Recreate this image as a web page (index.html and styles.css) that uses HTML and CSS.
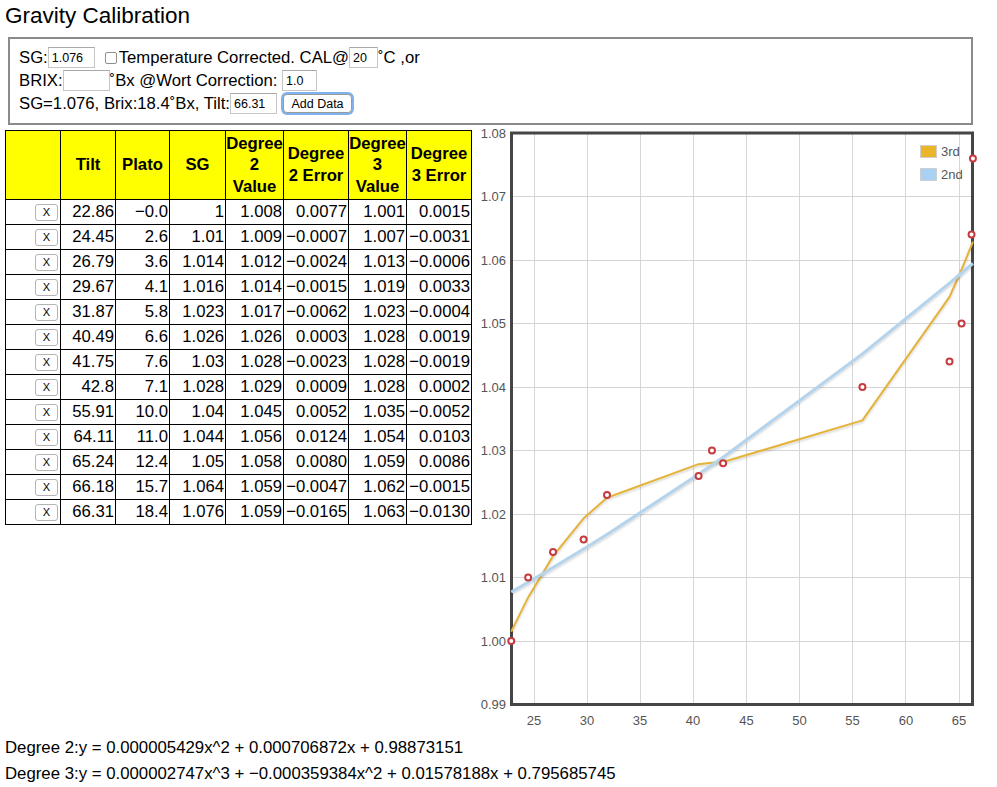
FILE: index.html
```html
<!DOCTYPE html>
<html>
<head>
<meta charset="utf-8">
<title>Gravity Calibration</title>
<link rel="stylesheet" href="styles.css">
</head>
<body>
<div class="page">
  <h1 class="title">Gravity Calibration</h1>
  <div class="form">
    <div class="row">
      <span>SG:</span><input class="inp w47" type="text" value="1.076"><input class="chk" type="checkbox"><span>Temperature Corrected. CAL@</span><input class="inp w29" type="text" value="20"><span>˚C ,or</span>
    </div>
    <div class="row">
      <span>BRIX:</span><input class="inp w47" type="text" value=""><span>˚Bx @Wort Correction: </span><input class="inp w35" type="text" value="1.0">
    </div>
    <div class="row">
      <span>SG=1.076, Brix:18.4˚Bx, Tilt:</span><input class="inp w47" type="text" value="66.31"><button class="btn" type="button">Add Data</button>
    </div>
  </div>

  <div class="main">
    <table class="tbl">
      <colgroup>
        <col class="c55"><col class="c55"><col class="c54"><col class="c56"><col class="c58"><col class="c65"><col class="c58"><col class="c65">
      </colgroup>
      <thead>
        <tr class="head">
          <th></th><th>Tilt</th><th>Plato</th><th>SG</th><th>Degree 2 Value</th><th>Degree 2 Error</th><th>Degree 3 Value</th><th>Degree 3 Error</th>
        </tr>
      </thead>
      <tbody>
        <tr><td><button class="x" type="button">X</button></td><td>22.86</td><td>−0.0</td><td>1</td><td>1.008</td><td>0.0077</td><td>1.001</td><td>0.0015</td></tr>
        <tr><td><button class="x" type="button">X</button></td><td>24.45</td><td>2.6</td><td>1.01</td><td>1.009</td><td>−0.0007</td><td>1.007</td><td>−0.0031</td></tr>
        <tr><td><button class="x" type="button">X</button></td><td>26.79</td><td>3.6</td><td>1.014</td><td>1.012</td><td>−0.0024</td><td>1.013</td><td>−0.0006</td></tr>
        <tr><td><button class="x" type="button">X</button></td><td>29.67</td><td>4.1</td><td>1.016</td><td>1.014</td><td>−0.0015</td><td>1.019</td><td>0.0033</td></tr>
        <tr><td><button class="x" type="button">X</button></td><td>31.87</td><td>5.8</td><td>1.023</td><td>1.017</td><td>−0.0062</td><td>1.023</td><td>−0.0004</td></tr>
        <tr><td><button class="x" type="button">X</button></td><td>40.49</td><td>6.6</td><td>1.026</td><td>1.026</td><td>0.0003</td><td>1.028</td><td>0.0019</td></tr>
        <tr><td><button class="x" type="button">X</button></td><td>41.75</td><td>7.6</td><td>1.03</td><td>1.028</td><td>−0.0023</td><td>1.028</td><td>−0.0019</td></tr>
        <tr><td><button class="x" type="button">X</button></td><td>42.8</td><td>7.1</td><td>1.028</td><td>1.029</td><td>0.0009</td><td>1.028</td><td>0.0002</td></tr>
        <tr><td><button class="x" type="button">X</button></td><td>55.91</td><td>10.0</td><td>1.04</td><td>1.045</td><td>0.0052</td><td>1.035</td><td>−0.0052</td></tr>
        <tr><td><button class="x" type="button">X</button></td><td>64.11</td><td>11.0</td><td>1.044</td><td>1.056</td><td>0.0124</td><td>1.054</td><td>0.0103</td></tr>
        <tr><td><button class="x" type="button">X</button></td><td>65.24</td><td>12.4</td><td>1.05</td><td>1.058</td><td>0.0080</td><td>1.059</td><td>0.0086</td></tr>
        <tr><td><button class="x" type="button">X</button></td><td>66.18</td><td>15.7</td><td>1.064</td><td>1.059</td><td>−0.0047</td><td>1.062</td><td>−0.0015</td></tr>
        <tr><td><button class="x" type="button">X</button></td><td>66.31</td><td>18.4</td><td>1.076</td><td>1.059</td><td>−0.0165</td><td>1.063</td><td>−0.0130</td></tr>
      </tbody>
    </table>

    <svg class="chart" width="521" height="604" viewBox="476 126 521 604" xmlns="http://www.w3.org/2000/svg">
      <defs>
        <filter id="sh" x="-5%" y="-5%" width="110%" height="115%">
          <feDropShadow dx="0" dy="1.5" stdDeviation="1" flood-color="#000" flood-opacity="0.2"/>
        </filter>
      </defs>
      <g class="grid">
        <line x1="533.5" y1="133" x2="533.5" y2="704.5"/>
        <line x1="586.5" y1="133" x2="586.5" y2="704.5"/>
        <line x1="639.5" y1="133" x2="639.5" y2="704.5"/>
        <line x1="692.5" y1="133" x2="692.5" y2="704.5"/>
        <line x1="745.5" y1="133" x2="745.5" y2="704.5"/>
        <line x1="798.5" y1="133" x2="798.5" y2="704.5"/>
        <line x1="851.5" y1="133" x2="851.5" y2="704.5"/>
        <line x1="904.5" y1="133" x2="904.5" y2="704.5"/>
        <line x1="958.5" y1="133" x2="958.5" y2="704.5"/>
        <line x1="510" y1="196.5" x2="972" y2="196.5"/>
        <line x1="510" y1="260.5" x2="972" y2="260.5"/>
        <line x1="510" y1="323.5" x2="972" y2="323.5"/>
        <line x1="510" y1="387.5" x2="972" y2="387.5"/>
        <line x1="510" y1="450.5" x2="972" y2="450.5"/>
        <line x1="510" y1="514.5" x2="972" y2="514.5"/>
        <line x1="510" y1="577.5" x2="972" y2="577.5"/>
        <line x1="510" y1="641.5" x2="972" y2="641.5"/>
      </g>
      <g class="ylab">
        <text x="505" y="133">1.08</text>
        <text x="505" y="196.5">1.07</text>
        <text x="505" y="260">1.06</text>
        <text x="505" y="323.5">1.05</text>
        <text x="505" y="387">1.04</text>
        <text x="505" y="450.5">1.03</text>
        <text x="505" y="514">1.02</text>
        <text x="505" y="577.5">1.01</text>
        <text x="505" y="641">1.00</text>
        <text x="505" y="704.5">0.99</text>
      </g>
      <g class="xlab">
        <text x="533" y="720">25</text>
        <text x="586" y="720">30</text>
        <text x="639" y="720">35</text>
        <text x="692" y="720">40</text>
        <text x="745.5" y="720">45</text>
        <text x="798.5" y="720">50</text>
        <text x="851.5" y="720">55</text>
        <text x="905" y="720">60</text>
        <text x="958" y="720">65</text>
      </g>
      <rect class="frame" x="510.5" y="133" width="461" height="571.5"/>
      <polyline class="l3" filter="url(#sh)" points="510.26,631.67 527.16,597.42 552.02,556.11 582.62,518.36 605.99,497.8 697.58,464.14 710.97,462.86 722.13,462.02 861.42,420.36 948.54,296.89 960.55,269.78 970.54,245.17 971.92,241.6"/>
      <polyline class="l2" filter="url(#sh)" points="510.26,591.93 527.16,582.2 552.02,567.56 582.62,549.03 605.99,534.49 697.58,474.29 710.97,465.07 722.13,457.29 861.42,353.83 948.54,283.09 960.55,272.99 970.54,264.5 971.92,263.33"/>
      <g class="pts">
        <circle cx="510.26" cy="641" r="3"/>
        <circle cx="527.16" cy="577.5" r="3"/>
        <circle cx="552.02" cy="552.1" r="3"/>
        <circle cx="582.62" cy="539.4" r="3"/>
        <circle cx="605.99" cy="494.95" r="3"/>
        <circle cx="697.58" cy="475.9" r="3"/>
        <circle cx="710.97" cy="450.5" r="3"/>
        <circle cx="722.13" cy="463.2" r="3"/>
        <circle cx="861.42" cy="387" r="3"/>
        <circle cx="948.54" cy="361.6" r="3"/>
        <circle cx="960.55" cy="323.5" r="3"/>
        <circle cx="970.54" cy="234.6" r="3"/>
        <circle cx="971.92" cy="158.4" r="3"/>
      </g>
      <g class="legend">
        <rect class="sw3" x="919.5" y="145.5" width="16" height="12"/>
        <text x="940" y="151.5">3rd</text>
        <rect class="sw2" x="919.5" y="168.5" width="16" height="12"/>
        <text x="940" y="174.5">2nd</text>
      </g>
    </svg>
  </div>

  <div class="eq">
    <div>Degree 2:y = 0.000005429x^2 + 0.000706872x + 0.98873151</div>
    <div>Degree 3:y = 0.000002747x^3 + −0.000359384x^2 + 0.01578188x + 0.795685745</div>
  </div>
</div>
</body>
</html>
```
FILE: styles.css
```css
body {
  margin: 0;
  background: #fff;
  color: #000;
  font-family: "Liberation Sans", Arial, sans-serif;
  font-size: 16.7px;
}

.page {
  padding-left: 5px;
}

.title {
  margin: 0;
  font-size: 22.5px;
  font-weight: normal;
  line-height: 32px;
}

.form {
  box-sizing: border-box;
  width: 965px;
  margin: 5px 0 0 3px;
  padding: 7px 9px 8px;
  border: 2px solid #8a8a8a;
}

.row {
  display: flex;
  align-items: center;
  height: 23px;
  white-space: pre;
}

.inp {
  box-sizing: border-box;
  height: 21px;
  margin: 0;
  padding: 0 3px;
  border: 1px solid #c6c6c6;
  border-top-color: #a9a9a9;
  font-family: "Liberation Sans", Arial, sans-serif;
  font-size: 12.5px;
  color: #000;
  background: #fff;
}

.w47 { width: 47px; }
.w29 { width: 29px; }
.w35 { width: 35px; }

.chk {
  -webkit-appearance: none;
  appearance: none;
  box-sizing: border-box;
  width: 12px;
  height: 12px;
  margin: 0 2px 0 10px;
  border: 1px solid #8f8f8f;
  border-radius: 2px;
  background: #fff;
}

.btn {
  box-sizing: border-box;
  height: 19px;
  width: 69px;
  margin: 0 0 0 6px;
  padding: 0;
  border: 1px solid #9a9a9a;
  border-radius: 4px;
  background: #fff;
  font-family: "Liberation Sans", Arial, sans-serif;
  font-size: 12.5px;
  color: #000;
  box-shadow: 0 0 0 2px #80b2ef;
}

.main {
  display: flex;
  align-items: flex-start;
  gap: 5px;
  margin-top: 1px;
}

.tbl {
  margin-top: 4px;
  width: 466px;
  table-layout: fixed;
  border-collapse: collapse;
  line-height: 21.6px;
}

.c54 { width: 54px; }
.c55 { width: 55px; }
.c56 { width: 56px; }
.c58 { width: 58px; }
.c65 { width: 65px; }

.tbl th,
.tbl td {
  border: 1px solid #000;
}

.tbl th {
  padding: 0;
  background: #ffff00;
  font-weight: bold;
  text-align: center;
  vertical-align: middle;
}

.tbl .head {
  height: 69px;
}

.tbl tbody tr {
  height: 25px;
}

.tbl td {
  padding: 1px 1px;
  text-align: right;
  white-space: nowrap;
}

.x {
  box-sizing: border-box;
  width: 23px;
  height: 17px;
  margin: 0 1px 0 0;
  padding: 0;
  border: 1px solid #b4b4b4;
  border-radius: 3px;
  background: #fff;
  font-family: "Liberation Sans", Arial, sans-serif;
  font-size: 11px;
  line-height: 15px;
  color: #000;
  vertical-align: middle;
}

.chart {
  display: block;
  flex: none;
}

.grid line {
  stroke: #d6d6d6;
  stroke-width: 1;
}

.ylab text,
.xlab text,
.legend text {
  font-family: "Liberation Sans", Arial, sans-serif;
  font-size: 13px;
  fill: #555;
  dominant-baseline: central;
}

.ylab text {
  text-anchor: end;
}

.xlab text {
  text-anchor: middle;
}

.frame {
  fill: none;
  stroke: #454545;
  stroke-width: 3;
}

.l3 {
  fill: none;
  stroke: #e4b33a;
  stroke-width: 2;
  stroke-linejoin: round;
}

.l2 {
  fill: none;
  stroke: #b4d4ee;
  stroke-width: 3;
  stroke-linejoin: round;
}

.pts circle {
  fill: #fff;
  stroke: #c43c3f;
  stroke-width: 2;
}

.sw3 {
  fill: #ebb52a;
  stroke: #cfcfcf;
  stroke-width: 1;
}

.sw2 {
  fill: #a9d1f5;
  stroke: #cfcfcf;
  stroke-width: 1;
}

.eq {
  margin-top: 5px;
  font-size: 16.8px;
  line-height: 26px;
}
```
